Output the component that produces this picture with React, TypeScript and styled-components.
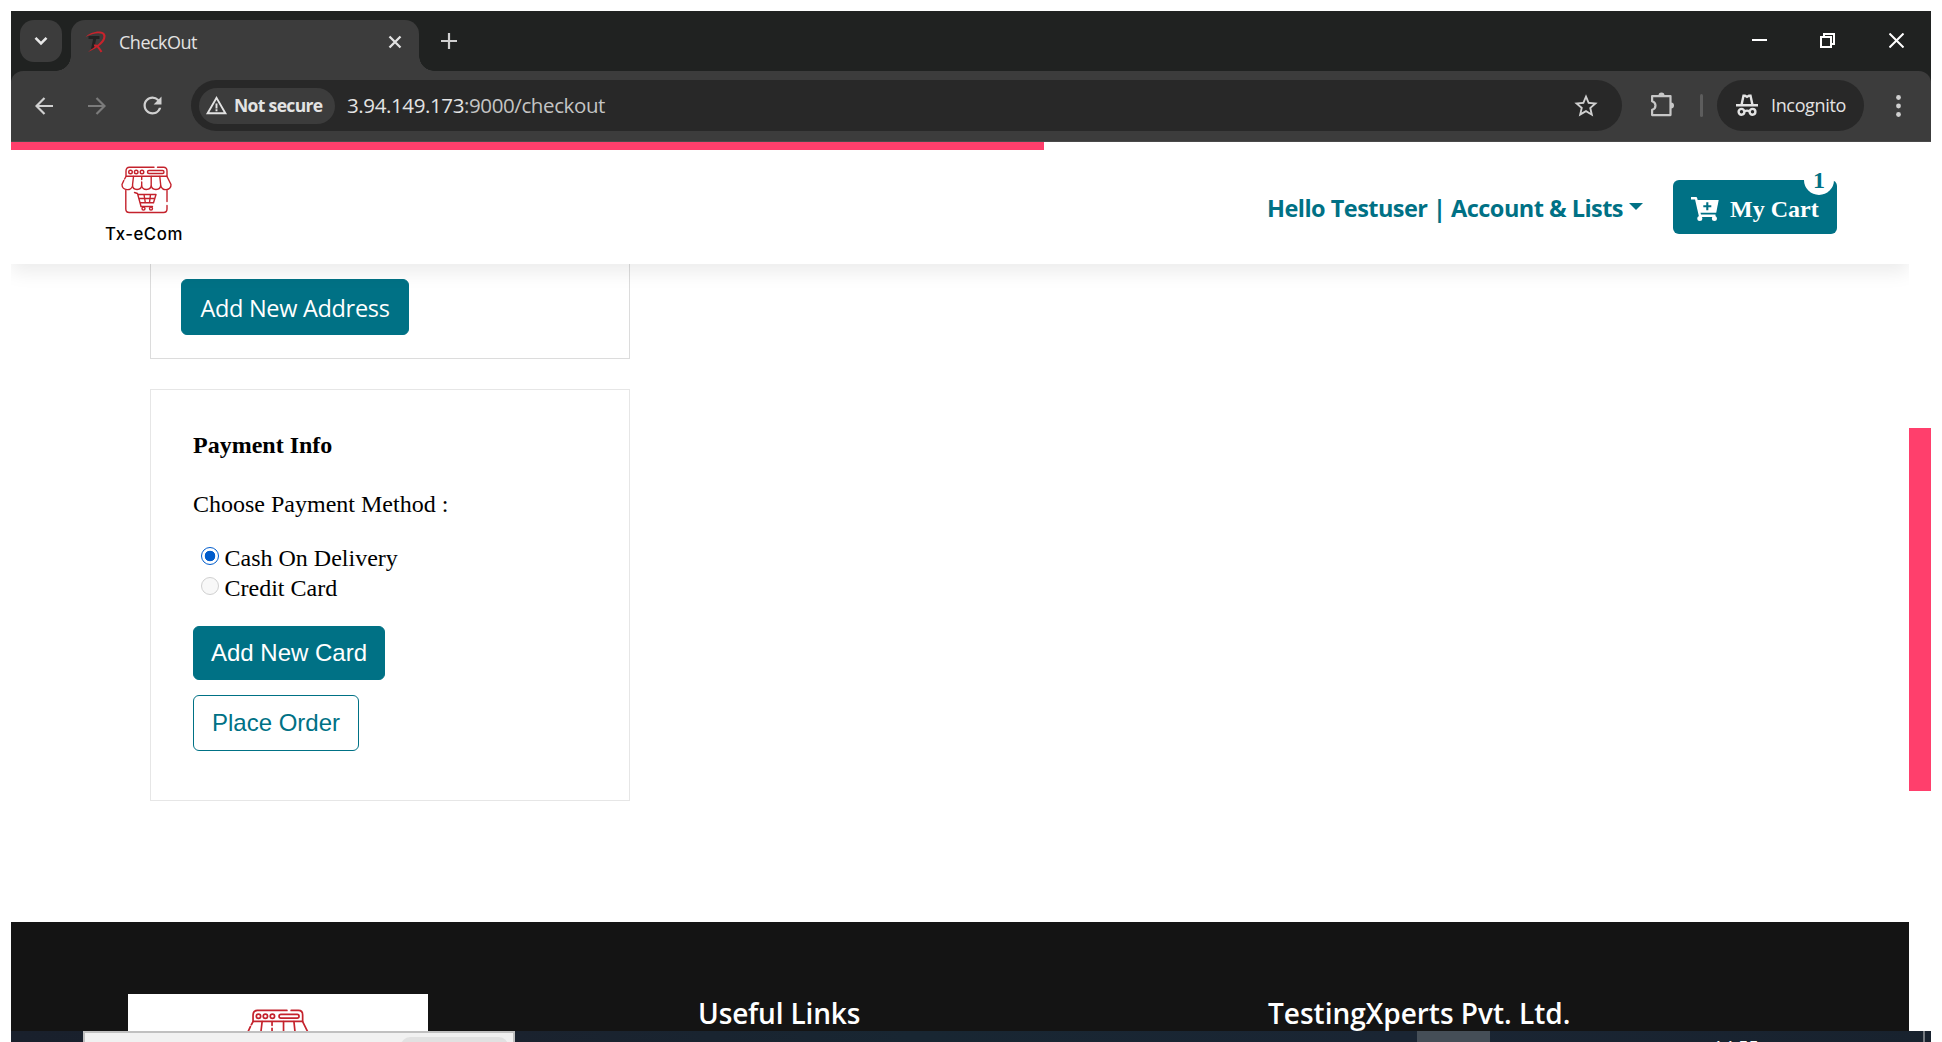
import React from "react";
import styled, { createGlobalStyle } from "styled-components";
import { MdRefresh, MdStarBorder, MdWarningAmber } from "react-icons/md";

const UI = '"Open Sans", "Noto Sans", sans-serif';
const SERIF = '"Liberation Serif", serif';
const SANS = '"Liberation Sans", sans-serif';
const TEAL = "#007185";
const PINK = "#ff3f6c";

const Global = createGlobalStyle`
  * { box-sizing: border-box; }
  html, body { margin: 0; background: #fff; overflow: hidden; }
`;

const Screen = styled.div`
  width: 1942px;
  height: 1042px;
  padding: 11px 11px 0;
  overflow: hidden;
  display: flex;
  flex-direction: column;
`;

const Text = styled.span<{ $size: number; $ls?: number; $color?: string; $weight?: number; $font?: string }>`
  font-family: ${(p) => p.$font ?? UI};
  font-size: ${(p) => p.$size}px;
  letter-spacing: ${(p) => p.$ls ?? 0}px;
  color: ${(p) => p.$color ?? "#e3e3e3"};
  font-weight: ${(p) => p.$weight ?? 400};
  white-space: nowrap;
`;

const Chrome = styled.div`
  background: #202221;
  flex: none;
`;

const TabStrip = styled.div`
  height: 60px;
  display: flex;
  padding-top: 9px;
  padding-left: 9px;
`;

const TabSearch = styled.div`
  width: 42px;
  height: 42px;
  border-radius: 14px;
  background: #3c3c3c;
  display: grid;
  place-items: center;
  margin-right: 9px;
`;

const Tab = styled.div`
  position: relative;
  width: 348px;
  height: 51px;
  border-radius: 14px 14px 0 0;
  background: #3c3c3c;
  display: flex;
  align-items: center;
  padding: 0 17px 7px 14px;
  &::before,
  &::after {
    content: "";
    position: absolute;
    bottom: 0;
    width: 15px;
    height: 15px;
  }
  &::before {
    left: -15px;
    background: radial-gradient(circle at 0 0, transparent 14.5px, #3c3c3c 15px);
  }
  &::after {
    right: -15px;
    background: radial-gradient(circle at 100% 0, transparent 14.5px, #3c3c3c 15px);
  }
`;

const TabTitle = styled.div`
  flex: 1;
  padding-left: 12px;
  display: flex;
`;

const NewTab = styled.div`
  width: 60px;
  height: 42px;
  display: grid;
  place-items: center;
`;

const WindowControls = styled.div`
  margin-left: auto;
  height: 41px;
  display: flex;
  align-items: center;
  gap: 53px;
  padding-right: 27px;
  svg:last-child {
    margin-left: 1px;
  }
`;

const Toolbar = styled.div`
  height: 71px;
  background: #3c3c3c;
  border-bottom: 1px solid #4a4a4a;
  border-radius: 12px 12px 0 0;
  display: flex;
  align-items: center;
  padding: 0 24px 1px 24px;
`;

const NavIcons = styled.div`
  width: 156px;
  display: flex;
  align-items: center;
  gap: 35px;
  svg:last-child {
    margin-left: -2px;
  }
`;

const Omnibox = styled.div`
  width: 1431px;
  height: 51px;
  border-radius: 26px;
  background: #282828;
  display: flex;
  align-items: center;
  padding: 0 22px 0 8px;
`;

const SecurityChip = styled.div`
  width: 136px;
  height: 36px;
  border-radius: 18px;
  background: #3c3c3c;
  display: flex;
  align-items: center;
  gap: 6px;
  padding: 0 0 1px 6px;
  margin-right: 12px;
`;

const Url = styled.div`
  flex: 1;
  display: flex;
  padding-bottom: 1px;
`;

const Divider = styled.div`
  width: 3px;
  height: 23px;
  border-radius: 2px;
  background: #5d5d5d;
  margin: 0 14px 0 24px;
`;

const IncognitoPill = styled.div`
  width: 147px;
  height: 51px;
  border-radius: 26px;
  background: #282828;
  display: flex;
  align-items: center;
  gap: 13px;
  padding: 0 0 1px 19px;
`;

const ExtensionSlot = styled.div`
  margin-left: 28px;
  display: flex;
  padding-bottom: 3px;
`;

const MenuSlot = styled.div`
  margin-left: auto;
  display: flex;
  padding-right: 6.5px;
`;

const Viewport = styled.div`
  height: 889px;
  flex: none;
  display: flex;
  overflow: hidden;
`;

const Page = styled.div`
  width: 1898px;
  height: 889px;
  display: flex;
  flex-direction: column;
  overflow: hidden;
`;

const ScrollTrack = styled.div`
  width: 22px;
  padding-top: 286px;
`;

const ScrollThumb = styled.div`
  height: 363px;
  background: ${PINK};
`;

const Progress = styled.div`
  width: 1033px;
  height: 8px;
  background: ${PINK};
  flex: none;
`;

const Header = styled.header`
  position: relative;
  z-index: 1;
  height: 114px;
  flex: none;
  background: #fff;
  box-shadow: 0 8px 18px rgba(0, 0, 0, 0.08);
  clip-path: inset(0 0 -30px 0);
  display: flex;
  align-items: center;
  padding: 0 72px 0 94px;
`;

const Brand = styled.div`
  display: flex;
  flex-direction: column;
  align-items: center;
  align-self: flex-start;
  padding-top: 16px;
  svg {
    margin-left: 6px;
  }
`;

const BrandName = styled(Text)`
  line-height: 26px;
  margin-top: 7px;
`;

const Account = styled.div`
  margin-left: auto;
  display: flex;
  align-items: center;
  margin-right: 30px;
  padding-top: 1px;
`;

const Caret = styled.span`
  border: 7px solid transparent;
  border-top-color: ${TEAL};
  border-bottom: 0;
  margin: 0 0 3px 6px;
`;

const CartButton = styled.div`
  position: relative;
  width: 164px;
  height: 54px;
  border-radius: 6px;
  background: ${TEAL};
  color: #fff;
  display: flex;
  align-items: center;
  padding-left: 18px;
  padding-top: 4px;
  gap: 11px;
`;

const CartBadge = styled.div`
  position: absolute;
  right: 3px;
  top: -15px;
  width: 30px;
  height: 30px;
  border-radius: 50%;
  background: #fff;
  display: grid;
  place-items: center;
  line-height: 28px;
`;

const Main = styled.main`
  height: 658px;
  flex: none;
  padding-left: 139px;
`;

const AddressCard = styled.section`
  width: 480px;
  height: 95px;
  border: 1px solid #dcdcdc;
  border-top: 0;
  padding: 15px 0 0 30px;
`;

const Button = styled.div<{ $w: number; $h: number; $outline?: boolean; $padTop?: number }>`
  width: ${(p) => p.$w}px;
  height: ${(p) => p.$h}px;
  border-radius: 6px;
  background: ${(p) => (p.$outline ? "#fff" : TEAL)};
  border: 1px solid ${TEAL};
  display: flex;
  align-items: center;
  justify-content: center;
  padding-top: ${(p) => p.$padTop ?? 0}px;
`;

const PaymentCard = styled.section`
  width: 480px;
  height: 412px;
  margin-top: 30px;
  border: 1px solid #e6e6e6;
  padding: 40px 0 0 42px;
  display: flex;
  flex-direction: column;
`;

const Line = styled.div<{ $mb?: number }>`
  height: 30px;
  line-height: 30px;
  display: flex;
  align-items: center;
  margin-bottom: ${(p) => p.$mb ?? 0}px;
`;

const Radio = styled.span<{ $on?: boolean }>`
  width: 18px;
  height: 18px;
  border-radius: 50%;
  border: ${(p) => (p.$on ? "1.5px solid #005ccc" : "1.5px solid #d0d0d0")};
  background: ${(p) => (p.$on ? "radial-gradient(circle, #005ccc 5px, #fff 5.6px)" : "#f8f8f8")};
  margin: 0 5.5px 4px 8px;
`;

const Buttons = styled.div`
  display: flex;
  flex-direction: column;
  gap: 15px;
`;

const Footer = styled.footer`
  height: 109px;
  flex: none;
  background: #141414;
  display: grid;
  grid-template-columns: 570px 570px 1fr;
  align-items: start;
  padding: 72px 0 0 117px;
  overflow: hidden;
`;

const FooterLogo = styled.div`
  width: 300px;
  height: 120px;
  background: #fff;
  display: flex;
  justify-content: center;
  padding-top: 15px;
`;

const FooterTitle = styled(Text)`
  line-height: 38px;
`;

const Taskbar = styled.div`
  height: 11px;
  flex: none;
  overflow: hidden;
  background: linear-gradient(90deg, #19202c 0, #1a222e 500px, #182632 900px, #1a2533 1400px, #18222e 100%);
  display: flex;
`;

const SearchBox = styled.div`
  width: 432px;
  height: 40px;
  margin-left: 72px;
  border: 2px solid #c0c0c0;
  background: #f1f1f1;
  display: flex;
  justify-content: flex-end;
  padding: 4px 5px 0;
`;

const SearchPill = styled.div`
  width: 107px;
  height: 30px;
  border-radius: 9px;
  background: #e1e1e1;
`;

const ActiveTask = styled.div`
  width: 73px;
  margin-left: 902px;
  background: #454e57;
`;

const Clock = styled(Text)`
  margin-left: 223px;
  padding-top: 4px;
  line-height: 24px;
`;

const DesktopEdge = styled.div`
  width: 2px;
  margin-left: auto;
  margin-right: 6px;
  background: #74797f;
`;

const StoreMark = ({ scale = 1 }: { scale?: number }) => (
  <svg width={51 * scale} height={48 * scale} viewBox="0 0 51 48" fill="none" stroke="#c4222c" strokeWidth="1.4" strokeLinecap="round" strokeLinejoin="round">
    <path d="M5 10V5Q5 1.2 8.5 1.2H33M36.5 1.2H42.5Q46 1.2 46 5V10M5 10.3H46" />
    <circle cx="9.5" cy="6" r="1.8" />
    <circle cx="15.2" cy="6" r="1.8" />
    <circle cx="21" cy="6" r="1.8" />
    <rect x="26.5" y="4.5" width="16.5" height="3" rx="1.5" />
    <path d="M5 10.5L3.6 13M2.8 14.5L1 18.5C.8 25 11 25.5 11.7 19M12.5 10.5L11.5 19C11.5 25 20.5 25 20.7 19V16M20.7 13.5V11M20.7 19C20.7 25 30 25 30.2 19V10.5M30.2 19C30.5 25 39.5 25 39.7 19L38.8 10.5M39.7 19C40 25.5 50.5 25 50 18.5L46 10.5" />
    <path d="M4.8 24.5V43Q4.8 46.5 8.3 46.5H42.5Q46 46.5 46 43V39.5M46 35.5V24.5" />
    <path d="M13.5 26.5L16.5 27.5L19.5 38.5L20 40.5H31.5M16.8 28.5H35L32.5 36.8H19M17.8 32.5H33.8M23 28.5L24.3 36.5M29.5 28.5L28.5 36.5" />
    <circle cx="22.5" cy="42.6" r="1.5" />
    <circle cx="30" cy="42.6" r="1.5" />
  </svg>
);

const Favicon = () => (
  <svg width="22" height="22" viewBox="0 0 22 22" fill="none">
    <path d="M3.5 6.5H14.5M10 6.5L7.5 18" stroke="#222" strokeWidth="3" />
    <path d="M.5 6C5 .5 19.5 -2.5 20.5 4.5C21 11 14 16 3 21C11 14.5 19 10.5 18.3 4.8C17.5 .8 8 2 .5 6Z" fill="#c8232c" />
    <path d="M9 14.5C12 14 13 15.5 16.5 21" stroke="#c8232c" strokeWidth="2" />
  </svg>
);

const CartPlus = () => (
  <svg width="28" height="25" viewBox="0 0 28 25" fill="none" stroke="#fff">
    <path d="M0 1.2H5L9 18.8H24.5" strokeWidth="2.4" strokeLinejoin="round" />
    <path d="M5 3H27.7L25.2 15.8H7.8Z" fill="#fff" stroke="none" />
    <path d="M16.3 5.3V13.3M12.3 9.3H20.3" stroke={TEAL} strokeWidth="2.1" />
    <circle cx="8.8" cy="21.6" r="2.5" fill="#fff" stroke="none" />
    <circle cx="23.4" cy="21.6" r="2.5" fill="#fff" stroke="none" />
  </svg>
);

export default function App() {
  return (
    <>
      <Global />
      <Screen>
        <Chrome>
          <TabStrip>
            <TabSearch>
              <svg width="14" height="10" viewBox="0 0 14 10" fill="none" stroke="#e8e8e8" strokeWidth="2.6"><path d="M1.5 1.8L7 7.3L12.5 1.8" /></svg>
            </TabSearch>
            <Tab>
              <Favicon />
              <TabTitle><Text $size={18} $ls={-0.5}>CheckOut</Text></TabTitle>
              <svg width="14" height="14" viewBox="0 0 14 14" stroke="#e3e3e3" strokeWidth="2.3"><path d="M1.5 1.5L12.5 12.5M12.5 1.5L1.5 12.5" /></svg>
            </Tab>
            <NewTab>
              <svg width="16" height="16" viewBox="0 0 16 16" stroke="#d0d0d0" strokeWidth="2.2"><path d="M8 0V16M0 8H16" /></svg>
            </NewTab>
            <WindowControls>
              <svg width="15" height="15" viewBox="0 0 15 15"><path d="M0 6H15V8H0Z" fill="#fff" /></svg>
              <svg width="15" height="15" viewBox="0 0 15 15" fill="none" stroke="#fff" strokeWidth="2"><path d="M1 4H11V14H1ZM4 4V1H14V11H11" /></svg>
              <svg width="15" height="15" viewBox="0 0 15 15" stroke="#fff" strokeWidth="2"><path d="M.5 .5L14.5 14.5M14.5 .5L.5 14.5" /></svg>
            </WindowControls>
          </TabStrip>
          <Toolbar>
            <NavIcons>
              <svg width="18" height="18" viewBox="0 0 18 18" fill="none" stroke="#d0d0d0" strokeWidth="2.2"><path d="M18 9H1.5M9.5 1L1.5 9L9.5 17" /></svg>
              <svg width="18" height="18" viewBox="0 0 18 18" fill="none" stroke="#7b7b7b" strokeWidth="2.2"><path d="M0 9H16.5M8.5 1L16.5 9L8.5 17" /></svg>
              <MdRefresh size={27} color="#d0d0d0" />
            </NavIcons>
            <Omnibox>
              <SecurityChip>
                <MdWarningAmber size={23} color="#e3e3e3" />
                <Text $size={17.5} $weight={700} $ls={-0.65}>Not secure</Text>
              </SecurityChip>
              <Url>
                <Text $size={20.5} $ls={-0.39}>3.94.149.173</Text>
                <Text $size={20.5} $ls={-0.39} $color="#c4c4c4">:9000/checkout</Text>
              </Url>
              <MdStarBorder size={28} color="#cfcfcf" />
            </Omnibox>
            <ExtensionSlot>
              <svg width="26" height="26" viewBox="0 0 26 26" fill="none" stroke="#c7c7c7" strokeWidth="2.2" strokeLinejoin="round"><path d="M2.1 5.1H20.5V24.1H2.1V18.8C6.6 17.5 6.6 11.5 2.1 10.2Z" /><path d="M8.5 4.5A3 3 0 0 1 14.5 4.5ZM21 11.5A3 3 0 0 1 21 17.5Z" fill="#c7c7c7" stroke="none" /></svg>
            </ExtensionSlot>
            <Divider />
            <IncognitoPill>
              <svg width="22" height="22" viewBox="0 0 22 22" fill="none" stroke="#e3e3e3" strokeWidth="2.4"><path d="M0 11.2H22M5.5 11L7.5 1.8H9L11 2.8L13 1.8H14.5L16.5 11M8.5 17.3Q11 16 13.5 17.3" /><circle cx="5.5" cy="17.8" r="2.9" /><circle cx="16.5" cy="17.8" r="2.9" /></svg>
              <Text $size={18} $ls={-0.35}>Incognito</Text>
            </IncognitoPill>
            <MenuSlot>
              <svg width="5" height="22" viewBox="0 0 5 22" fill="#d0d0d0"><circle cx="2.5" cy="2.5" r="2.4" /><circle cx="2.5" cy="11" r="2.4" /><circle cx="2.5" cy="19.5" r="2.4" /></svg>
            </MenuSlot>
          </Toolbar>
        </Chrome>

        <Viewport>
          <Page>
            <Progress />
            <Header>
              <Brand>
                <StoreMark />
                <BrandName $font="Inter, sans-serif" $size={16.8} $weight={500} $ls={0.55} $color="#000">Tx-eCom</BrandName>
              </Brand>
              <Account>
                <Text $size={23.5} $weight={700} $ls={-0.53} $color={TEAL}>Hello Testuser | Account &amp; Lists</Text>
                <Caret />
              </Account>
              <CartButton>
                <CartPlus />
                <Text $font={SERIF} $size={24} $weight={700} $color="#fff">My Cart</Text>
                <CartBadge><Text $font={SERIF} $size={24} $weight={700} $color={TEAL}>1</Text></CartBadge>
              </CartButton>
            </Header>
            <Main>
              <AddressCard>
                <Button $w={228} $h={56} $padTop={2}><Text $size={23.5} $ls={-0.3} $color="#fff">Add New Address</Text></Button>
              </AddressCard>
              <PaymentCard>
                <Line $mb={29}><Text $font={SERIF} $size={24} $weight={700} $color="#000">Payment Info</Text></Line>
                <Line $mb={24}><Text $font={SERIF} $size={24} $color="#000">Choose Payment Method :</Text></Line>
                <Line><Radio $on /><Text $font={SERIF} $size={24} $color="#000">Cash On Delivery</Text></Line>
                <Line $mb={23}><Radio /><Text $font={SERIF} $size={24} $color="#000">Credit Card</Text></Line>
                <Buttons>
                  <Button $w={192} $h={54}><Text $font={SANS} $size={24} $color="#fff">Add New Card</Text></Button>
                  <Button $w={166} $h={56} $outline><Text $font={SANS} $size={24} $color={TEAL}>Place Order</Text></Button>
                </Buttons>
              </PaymentCard>
            </Main>
            <Footer>
              <FooterLogo><StoreMark scale={1.21} /></FooterLogo>
              <FooterTitle $size={28} $weight={600} $ls={-0.15} $color="#fff">Useful Links</FooterTitle>
              <FooterTitle $size={28} $weight={600} $color="#fff">TestingXperts Pvt. Ltd.</FooterTitle>
            </Footer>
          </Page>
          <ScrollTrack><ScrollThumb /></ScrollTrack>
        </Viewport>

        <Taskbar>
          <SearchBox><SearchPill /></SearchBox>
          <ActiveTask />
          <Clock $size={18} $color="#fff">14:55</Clock>
          <DesktopEdge />
        </Taskbar>
      </Screen>
    </>
  );
}
